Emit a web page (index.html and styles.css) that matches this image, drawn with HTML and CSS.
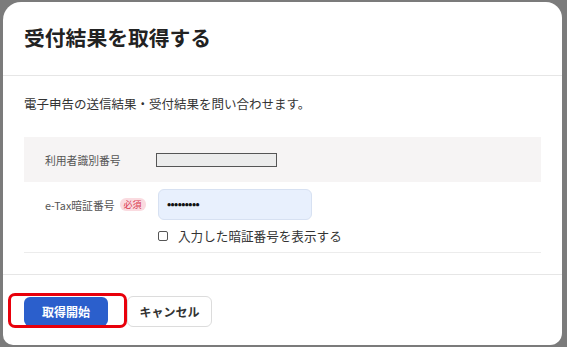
FILE: index.html
```html
<!DOCTYPE html>
<html lang="ja">
<head>
<meta charset="utf-8">
<title>受付結果を取得する</title>
<link rel="stylesheet" href="styles.css">
</head>
<body>
<div class="dialog">
  <div class="header">
    <h1 class="title">受付結果を取得する</h1>
  </div>
  <div class="body">
    <p class="desc">電子申告の送信結果・受付結果を問い合わせます。</p>
    <div class="row row-gray">
      <div class="label">利用者識別番号</div>
      <div class="readonly"></div>
    </div>
    <div class="row row-pass">
      <div class="label">e-Tax暗証番号<span class="badge">必須</span></div>
      <div class="field">
        <div class="pass">•••••••••</div>
        <label class="check"><span class="box"></span>入力した暗証番号を表示する</label>
      </div>
    </div>
  </div>
  <div class="footer">
    <button class="btn btn-primary">取得開始</button>
    <button class="btn btn-cancel">キャンセル</button>
    <div class="mark"></div>
  </div>
</div>
</body>
</html>
```
FILE: styles.css
```css
* { box-sizing: border-box; }
html, body { margin: 0; padding: 0; }
body {
  width: 567px;
  height: 347px;
  background: #7b7b7b;
  font-family: "Noto Sans CJK JP", "Noto Sans", sans-serif;
  color: #333;
  overflow: hidden;
  padding: 2px 5px 2px 3px;
}
.dialog {
  width: 559px;
  height: 343px;
  background: #fff;
  border-radius: 18px 16px 12px 10px;
  display: flex;
  flex-direction: column;
}
.header {
  height: 74px;
  display: flex;
  align-items: center;
  padding-left: 21px;
  border-bottom: 1px solid #e6e6e6;
}
.title {
  margin: 0;
  font-size: 20.8px;
  font-weight: 700;
  color: #222;
  line-height: 1;
  padding-bottom: 2px;
}
.body {
  padding: 19px 21px 0 21px;
  border-bottom: 1px solid #e6e6e6;
  height: 199px;
}
.desc {
  margin: 0 0 24px 0;
  font-size: 12.5px;
  line-height: 18px;
  color: #333;
}
.row {
  display: flex;
  padding-left: 21px;
}
.row-gray {
  height: 45px;
  background: #f6f4f4;
  align-items: center;
}
.label {
  width: 111px;
  font-size: 10.8px;
  color: #555;
  display: flex;
  align-items: center;
}
.readonly {
  width: 121px;
  height: 14px;
  background: #ececec;
  border: 1px solid #555;
}
.row-pass {
  height: 71px;
  padding-top: 7px;
  border-bottom: 1px solid #ececec;
  align-items: flex-start;
}
.row-pass .label {
  height: 31px;
  width: 113px;
}
.badge {
  margin-left: 5px;
  background: #fadbe0;
  color: #d8384f;
  font-size: 9px;
  border-radius: 6px;
  padding: 1px 4px;
  line-height: 11px;
}
.field {
  display: flex;
  flex-direction: column;
}
.pass {
  width: 154px;
  height: 31px;
  background: #e8f0fd;
  border: 1px solid #d7e1f2;
  border-radius: 6px;
  font-size: 11px;
  font-weight: 700;
  color: #111;
  padding-left: 8px;
  padding-bottom: 3px;
  display: flex;
  align-items: center;
  letter-spacing: -0.6px;
}
.check {
  display: flex;
  align-items: center;
  margin-top: 9px;
  font-size: 12.6px;
  line-height: 14px;
  color: #333;
}
.box {
  width: 10px;
  height: 10px;
  border: 1px solid #555;
  border-radius: 2px;
  margin-right: 10px;
  background: #fff;
}
.footer {
  position: relative;
  display: flex;
  align-items: center;
  padding-left: 21px;
  padding-top: 2px;
  flex: 1;
}
.btn {
  font-family: "Noto Sans CJK JP", "Noto Sans", sans-serif;
  font-size: 12px;
  font-weight: 700;
  border-radius: 6px;
  padding: 0;
  cursor: pointer;
}
.btn-primary {
  width: 84px;
  height: 29px;
  background: #2b5fcc;
  color: #fff;
  border: none;
}
.btn-cancel {
  margin-left: 19px;
  width: 85px;
  height: 31px;
  background: #fff;
  color: #333;
  border: 1px solid #dcdcdc;
}
.mark {
  position: absolute;
  left: 5px;
  top: 18px;
  width: 119px;
  height: 35px;
  border: 3px solid #e8000b;
  border-radius: 7px;
  pointer-events: none;
}
```
